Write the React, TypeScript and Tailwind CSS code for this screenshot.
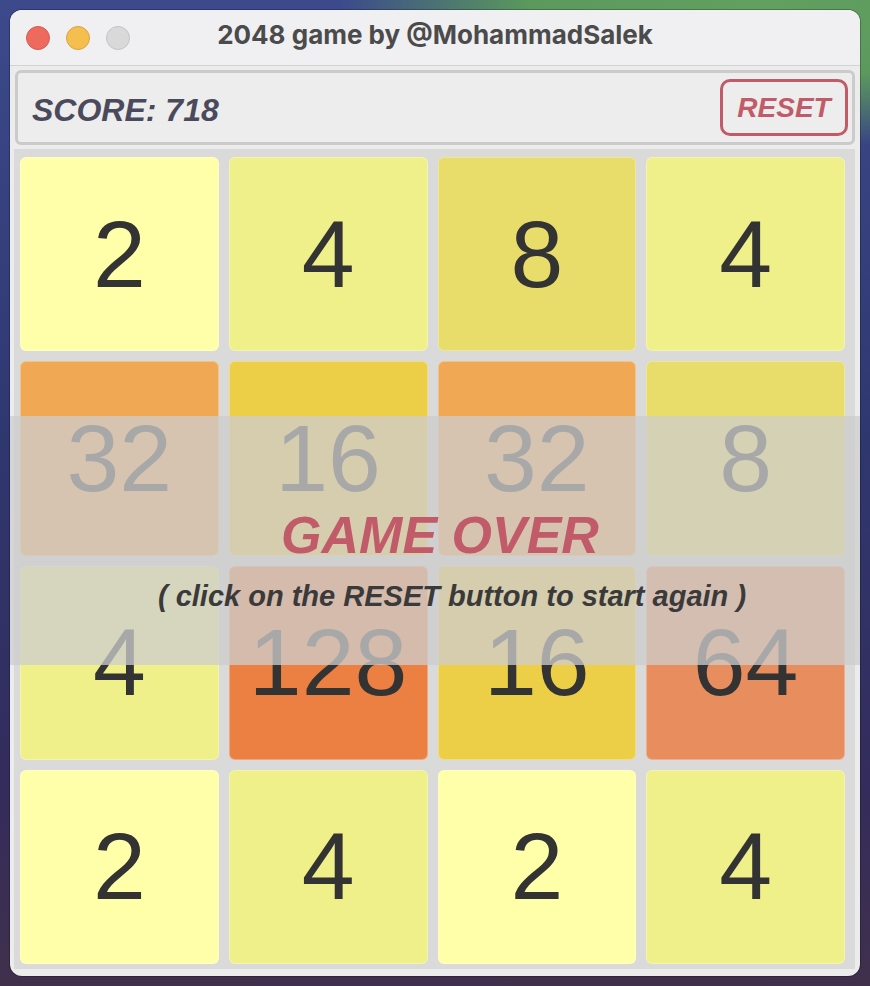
import React from "react";

type Tile = { v: number; bg: string };

const tiles: Tile[] = [
  { v: 2, bg: "bg-[#ffffa9]" },
  { v: 4, bg: "bg-[#eff08a]" },
  { v: 8, bg: "bg-[#e8dc6a]" },
  { v: 4, bg: "bg-[#eff08a]" },
  { v: 32, bg: "bg-[#f1a854]" },
  { v: 16, bg: "bg-[#ecce47]" },
  { v: 32, bg: "bg-[#f1a854]" },
  { v: 8, bg: "bg-[#e8dc6a]" },
  { v: 4, bg: "bg-[#eff08a]" },
  { v: 128, bg: "bg-[#ec8043]" },
  { v: 16, bg: "bg-[#ecce47]" },
  { v: 64, bg: "bg-[#e88d5e]" },
  { v: 2, bg: "bg-[#ffffa9]" },
  { v: 4, bg: "bg-[#eff08a]" },
  { v: 2, bg: "bg-[#ffffa9]" },
  { v: 4, bg: "bg-[#eff08a]" },
];

export default function App() {
  return (
    <div
      className="w-[870px] h-[986px] p-[10px] overflow-hidden bg-[radial-gradient(ellipse_420px_150px_at_760px_0px,#62a062_0%,#5b995c_55%,transparent_100%),linear-gradient(180deg,#3c4a8c_0%,#2f376f_45%,#342c5c_80%,#40304c_100%)]"
      style={{ fontFamily: '"Liberation Sans", Arial, sans-serif' }}
    >
      <div className="relative h-full flex flex-col rounded-[12px] overflow-hidden bg-[#ececec] shadow-[0_0_0_1px_rgba(0,0,0,0.25)]">
        {/* Title bar */}
        <div className="h-[56px] shrink-0 flex items-center border-b border-[#d3d3d3] bg-[#f0f0f2]">
          <div className="w-[140px] pl-[16px] flex items-center gap-[16px]">
            <span className="w-[24px] h-[24px] rounded-full bg-[#ee6a5f] border border-[#d65b50]" />
            <span className="w-[24px] h-[24px] rounded-full bg-[#f5bf4f] border border-[#d9a443]" />
            <span className="w-[24px] h-[24px] rounded-full bg-[#d9d9d9] border border-[#c4c4c4]" />
          </div>
          <div
            className="flex-1 text-center text-[26px] font-bold text-[#4b4b4b] leading-none pb-[5px]"
            style={{ fontFamily: "Inter, 'Liberation Sans', sans-serif" }}
          >
            2048 game by @MohammadSalek
          </div>
          <div className="w-[140px]" />
        </div>

        {/* Score panel */}
        <div className="mx-[5px] mt-[4px] h-[75px] shrink-0 border-[3px] border-[#cbcbcb] rounded-[6px] bg-[#ededed] flex items-center justify-between pl-[14px] pr-[4px]">
          <div className="mt-[4px] text-[32px] leading-none font-bold italic text-[#4a4a5c]">
            SCORE: 718
          </div>
          <div className="w-[128px] h-[57px] rounded-[10px] border-[3px] border-[#c15b69] flex items-center justify-center text-[28px] leading-none font-bold italic text-[#c15b69]">
            RESET
          </div>
        </div>

        {/* Grid */}
        <div className="ml-[4px] mr-[5px] mt-[4px] h-[820px] shrink-0 bg-[#dadada] pl-[6px] pr-[10px] pt-[8px] pb-[5px] grid grid-cols-4 grid-rows-4 gap-[10px]">
          {tiles.map((t, i) => (
            <div
              key={i}
              className={`${t.bg} rounded-[6px] border border-white/30 flex items-center justify-center text-[95px] leading-none text-[#333333]`}
            >
              {t.v}
            </div>
          ))}
        </div>

        {/* Game over overlay */}
        <div className="absolute left-0 right-0 top-[406px] h-[249px] bg-[rgba(205,205,205,0.76)] flex flex-col items-center pt-[93px]">
          <div className="ml-[10px] text-[52px] leading-none font-bold italic text-[#c15b69]">
            GAME OVER
          </div>
          <div className="ml-[34px] mt-[21px] text-[29px] leading-none font-bold italic text-[#3a3a3a]">
            ( click on the RESET button to start again )
          </div>
        </div>
      </div>
    </div>
  );
}
